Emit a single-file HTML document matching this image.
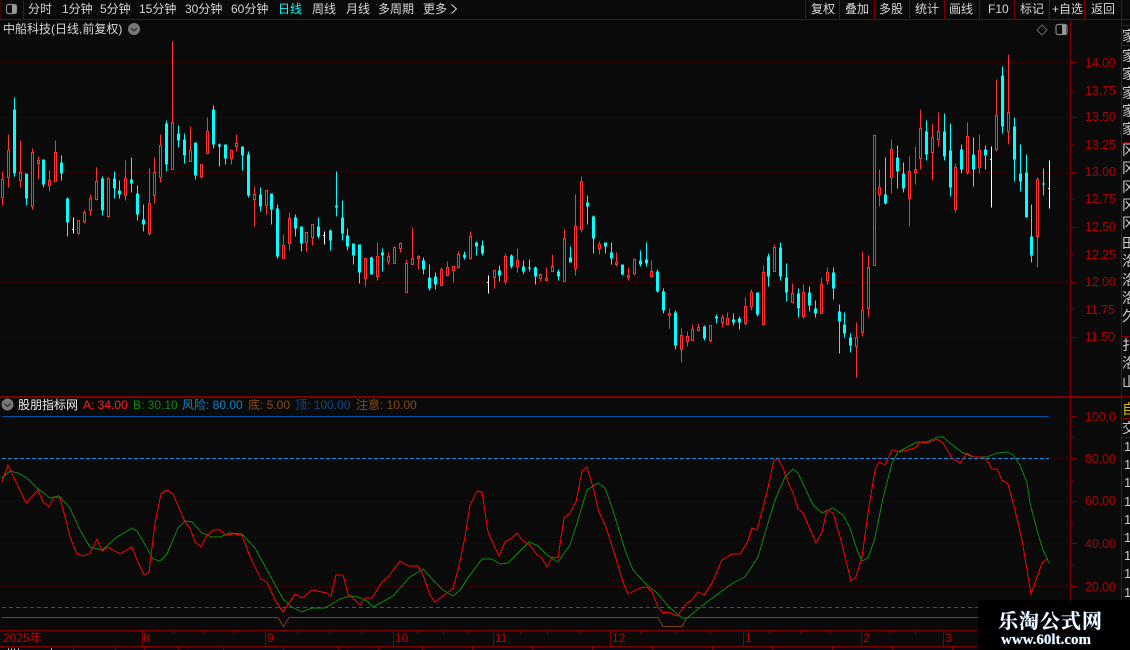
<!DOCTYPE html>
<html lang="zh"><head><meta charset="utf-8"><title>中船科技</title>
<style>
html,body{margin:0;padding:0;background:#0a0a0a}
#r{position:relative;width:1130px;height:650px;overflow:hidden;background:#0a0a0a;font:12px/14px "Liberation Sans","WenQuanYi Zen Hei","Noto Sans CJK SC",sans-serif;color:#d8d8d8}
#r svg.m{position:absolute;left:0;top:0}
.t{position:absolute;white-space:pre;line-height:14px;font-size:12px}
.tb{top:2px}
.ax{position:absolute;left:1085px;color:#b00000;font-size:12.500px;line-height:14px;letter-spacing:-.1px}
.sd{position:absolute;left:1122px;width:8px;overflow:hidden;color:#ccc;font-size:14px;line-height:18.3px;white-space:pre}
.tm{position:absolute;top:631px;color:#c00000;font-size:12px;line-height:15px}
</style></head><body><div id="r">
<svg class="m" width="1130" height="650" viewBox="0 0 1130 650" shape-rendering="crispEdges">
<g stroke="#560000" stroke-dasharray="1 3" fill="none">
<path d="M2 62.5H1070M2 117.5H1070M2 172.5H1070M2 227.5H1070M2 282.5H1070M2 337.5H1070M2 458.5H1070M2 501.5H1070M2 543.5H1070M2 586.5H1070"/>
</g>
<g stroke="#7f0000" fill="none">
<path d="M0 19.5H1130M0 .5V19M23.5 0V19M805.5 0V19M839.5 0V19M874.5 0V19M909.5 0V19M944.5 0V19M979.5 0V19M1014.5 0V19M1049.5 0V19M1084.5 0V19M1121.5 0V650"/>
<path d="M1070.5 20V647M0 396.5H1122M0 397.5H1122M0 630.5H1070M0 646.5H1130"/>
<path d="M1122 25.5H1130M1122 45.5H1130M1122 142.5H1130M1122 239.5H1130M1122 336.5H1130M1122 396.5H1130M1122 418.5H1130M1122 437.5H1130"/>
<path d="M1071 62.5H1077M1071 90.5H1074M1071 117.5H1077M1071 144.5H1074M1071 172.5H1077M1071 199.5H1074M1071 227.5H1077M1071 254.5H1074M1071 282.5H1077M1071 309.5H1074M1071 337.5H1077"/>
<path d="M1071 416.5H1077M1071 437.5H1074M1071 458.5H1077M1071 480.5H1074M1071 501.5H1077M1071 522.5H1074M1071 543.5H1077M1071 565.5H1074M1071 586.5H1077M1071 607.5H1074"/>
<path d="M142.5 630V647M265.5 630V647M393.5 630V647M493.5 630V647M610.5 630V647M743.5 630V647M861.5 630V647M943.5 630V647"/>
<path d="M173.5 631V634M204.5 631V634M234.5 631V634M297.5 631V634M329.5 631V634M361.5 631V634M418.5 631V634M443.5 631V634M468.5 631V634M520.5 631V634M547.5 631V634M580.5 631V634M640.5 631V634M675.5 631V634M710.5 631V634M770.5 631V634M800.5 631V634M830.5 631V634M890.5 631V634M915.5 631V634"/>
<path d="M73.5 647V650M115.5 647V650M144.5 647V650M178.5 647V650M223.5 647V650M283.5 647V650M338.5 647V650M378.5 647V650M422.5 647V650M472.5 647V650M532.5 647V650M592.5 647V650M652.5 647V650M712.5 647V650M772.5 647V650M832.5 647V650M892.5 647V650M952.5 647V650"/>
</g>
<path d="M8.500 648.500V650M11.500 648.500V650M14.500 648.500V650M18.500 648.500V650M51.500 648.500V650" stroke="#ddd" fill="none"/>
<path d="M451.500 4.500l5 4.500-5 4.500" stroke="#d8d8d8" fill="none" shape-rendering="auto"/>
<g transform="translate(0,.5)">
<path fill="none" stroke="#ff3232" d="M2.5 171V179M2.5 197V205M1.5 179h2v18h-2zM8.5 134V150M8.5 177V187M7.5 150h2v27h-2zM20.5 140V172M20.5 180V187M19.5 172h2v8h-2zM32.5 148V152M32.5 206V209M31.5 152h2v54h-2zM38.5 156V160M38.5 163V179M37.5 160h2v3h-2zM49.5 170V180M49.5 185V191M48.5 180h2v5h-2zM55.5 140V152M54.5 152h2v29h-2zM78.5 233V234M77.5 220h2v13h-2zM84.5 210V212M84.5 221V223M83.5 212h2v9h-2zM90.5 194V198M90.5 210V215M89.5 198h2v12h-2zM96.5 167V181M96.5 199V200M95.5 181h2v18h-2zM108.5 177V178M108.5 216V217M107.5 178h2v38h-2zM125.5 160V178M125.5 195V200M124.5 178h2v17h-2zM149.5 168V203M149.5 233V235M148.5 203h2v30h-2zM154.5 157V172M154.5 195V203M153.5 172h2v23h-2zM160.5 134V145M160.5 177V182M159.5 145h2v32h-2zM172.5 41V122M171.5 122h2v47h-2zM190.5 126V150M189.5 150h2v11h-2zM201.5 176V178M200.5 164h2v12h-2zM207.5 117V131M206.5 131h2v22h-2zM231.5 149V150M231.5 158V164M230.5 150h2v8h-2zM236.5 134V143M236.5 146V151M235.5 143h2v3h-2zM254.5 186V194M254.5 199V226M253.5 194h2v5h-2zM266.5 205V214M265.5 190h2v15h-2z"/>
<path fill="none" stroke="#ff3232" d="M283.5 234V245M282.5 245h2v13h-2zM289.5 212V218M289.5 243V250M288.5 218h2v25h-2zM306.5 242V251M305.5 232h2v10h-2zM312.5 237V245M311.5 224h2v13h-2zM365.5 278V286M364.5 258h2v20h-2zM377.5 242V256M377.5 276V280M376.5 256h2v20h-2zM388.5 252V256M388.5 261V264M387.5 256h2v5h-2zM394.5 246V247M393.5 247h2v16h-2zM400.5 242V243M400.5 248V252M399.5 243h2v5h-2zM406.5 259V263M405.5 263h2v29h-2zM412.5 227V258M411.5 258h2v6h-2zM418.5 255V256M418.5 258V269M417.5 256h2v2h-2zM441.5 267V269M440.5 269h2v16h-2zM447.5 261V267M446.5 267h2v8h-2zM453.5 270V282M452.5 266h2v4h-2zM458.5 251V254M458.5 267V268M457.5 254h2v13h-2zM470.5 231V236M470.5 258V259M469.5 236h2v22h-2zM494.5 277V288M493.5 270h2v7h-2zM505.5 253V256M505.5 281V284M504.5 256h2v25h-2zM517.5 248V260M517.5 266V272M516.5 260h2v6h-2zM540.5 273V274M540.5 278V281M539.5 274h2v4h-2zM546.5 267V278M545.5 278h2v2h-2zM552.5 254V266M551.5 266h2v5h-2zM564.5 229V238M563.5 238h2v43h-2zM575.5 194V226M575.5 268V275M574.5 226h2v42h-2zM581.5 176V181M581.5 229V232M580.5 181h2v48h-2zM599.5 241V244M599.5 248V254M598.5 244h2v4h-2zM616.5 252V262M616.5 264V266M615.5 262h2v2h-2zM628.5 267V275M628.5 277V280M627.5 275h2v2h-2zM634.5 258V259M634.5 273V275M633.5 259h2v14h-2zM651.5 260V271M651.5 276V277M650.5 271h2v5h-2z"/>
<path fill="none" stroke="#ff3232" d="M669.5 308V313M669.5 315V328M668.5 313h2v2h-2zM681.5 328V335M681.5 349V362M680.5 335h2v14h-2zM687.5 331V336M687.5 341V346M686.5 336h2v5h-2zM692.5 324V329M691.5 329h2v11h-2zM698.5 323V327M697.5 327h2v3h-2zM710.5 340V342M709.5 325h2v15h-2zM722.5 314V317M722.5 322V327M721.5 317h2v5h-2zM727.5 312V318M726.5 318h2v6h-2zM745.5 297V306M745.5 323V325M744.5 306h2v17h-2zM751.5 289V292M751.5 306V310M750.5 292h2v14h-2zM763.5 265V272M763.5 324V325M762.5 272h2v52h-2zM774.5 244V247M773.5 247h2v24h-2zM792.5 283V293M791.5 293h2v9h-2zM803.5 284V292M803.5 316V318M802.5 292h2v24h-2zM821.5 277V284M820.5 284h2v29h-2zM827.5 267V272M827.5 280V284M826.5 272h2v8h-2zM856.5 322V337M856.5 346V377M855.5 337h2v9h-2zM862.5 251V310M862.5 332V336M861.5 310h2v22h-2zM868.5 255V267M868.5 308V317M867.5 267h2v41h-2zM873.5 135h2v130h-2zM879.5 169V187M879.5 194V206M878.5 187h2v7h-2zM891.5 139V149M891.5 177V193M890.5 149h2v28h-2zM909.5 156V171M909.5 198V226M908.5 171h2v27h-2zM915.5 146V169M915.5 172V184M914.5 169h2v3h-2zM920.5 109V128M920.5 158V169M919.5 128h2v30h-2zM932.5 123V137M932.5 152V180M931.5 137h2v15h-2zM938.5 112V131M938.5 139V146M937.5 131h2v8h-2zM955.5 163V167M955.5 209V212M954.5 167h2v42h-2zM967.5 122V136M967.5 172V174M966.5 136h2v36h-2zM979.5 134V150M979.5 167V173M978.5 150h2v17h-2zM996.5 79V115M996.5 149V151M995.5 115h2v34h-2zM1008.5 54V112M1008.5 131V144M1007.5 112h2v19h-2zM1037.5 177V179M1037.5 236V267M1036.5 179h2v57h-2z"/>
<path fill="none" stroke="#0ff" d="M14.5 97V176M26.5 173V205M43.5 159V187M61.5 155V180M67.5 197V236M102.5 176V215M114.5 171V198M119.5 180V198M131.5 157V192M137.5 185V220M143.5 204V231M166.5 120V171M178.5 125V147M184.5 133V163M195.5 142V179M213.5 105V148M219.5 143V166M225.5 144V164M242.5 146V170M248.5 151V197M260.5 187V211M271.5 193V224M277.5 204V258M295.5 214V236M301.5 226V251M318.5 217V238M330.5 229V250M336.5 171V216M342.5 200V240M347.5 228V250M353.5 243V264M359.5 244V283M371.5 256V274M382.5 248V271M423.5 257V274M429.5 264V290M435.5 272V289M464.5 251V259M476.5 241V255M482.5 240V255M499.5 265V281M511.5 254V268M523.5 260V274M529.5 259V271M535.5 266V284M558.5 269V280M570.5 246V262M587.5 195V224M593.5 215V253M605.5 242V253M611.5 242V264M622.5 264V275M640.5 250V266M646.5 242V266M657.5 269V292M663.5 288V313M675.5 310V349M704.5 325V340M716.5 314V323M733.5 313V325M739.5 316V329M757.5 292V316M768.5 253V286M780.5 242V280M786.5 263V301M798.5 288V317M809.5 286V311M815.5 300V317M833.5 267V299M839.5 304V353M844.5 312V337M850.5 333V352M885.5 157V204M897.5 145V188M903.5 162V192M926.5 120V160M944.5 113V160M950.5 123V196M961.5 144V173M973.5 137V186M985.5 145V169M1002.5 66V133M1014.5 117V181M1020.5 144V191M1026.5 154V217M1031.5 204V262M1043.5 168V195"/>
<path fill="none" stroke="#0ff" stroke-width="3" d="M14.5 109V173M26.5 173V198M43.5 159V184M61.5 162V173M67.5 198V222M102.5 178V210M114.5 178V188M119.5 190V194M131.5 179V183M137.5 193V214M143.5 219V224M166.5 123V164M178.5 133V140M184.5 139V155M195.5 142V175M213.5 109V144M219.5 144V146M225.5 144V158M242.5 146V155M248.5 154V195M260.5 194V206M271.5 193V209M277.5 208V256M295.5 217V228M301.5 226V243M318.5 226V236M330.5 230V240M336.5 205V207M342.5 217V233M347.5 235V246M353.5 243V255M359.5 244V272M371.5 257V274M382.5 252V255M423.5 260V269M429.5 277V288M435.5 276V284M464.5 254V257M476.5 242V246M482.5 245V253M499.5 270V275M511.5 255V266M523.5 266V271M529.5 267V268M535.5 267V276M558.5 271V276M570.5 257V262M587.5 202V206M593.5 216V238M605.5 242V246M611.5 252V258M622.5 264V274M640.5 260V264M646.5 259V263M657.5 271V291M663.5 291V310M675.5 312V345M704.5 326V338M716.5 316V318M733.5 319V322M739.5 318V322M757.5 292V314M768.5 256V276M780.5 247V276M786.5 277V292M798.5 293V308M809.5 292V305M815.5 308V313M833.5 272V288M839.5 311V321M844.5 324V333M850.5 337V345M885.5 194V203M897.5 157V171M903.5 173V188M926.5 131V154M944.5 131V156M950.5 150V187M961.5 149V169M973.5 154V169M985.5 149V155M1002.5 75V126M1014.5 126V159M1020.5 173V181M1026.5 172V217M1031.5 236V255M1043.5 183V184"/>
<path fill="none" stroke="#fff" d="M73.5 217V233M72 229H73M324.5 231V244M323 235H324M488.5 275V293M487 282H488M991.5 146V207M990 159H991M1049.5 160V208M1048 188H1049"/>
</g>
<path d="M2 416.5H1049" stroke="#00559f" fill="none"/>
<path d="M2 458.5H1049" stroke="#0090e0" stroke-dasharray="4 2" fill="none"/>
<path d="M2 607.5H1070" stroke="#7a4210" stroke-dasharray="4 3" fill="none"/>
<g fill="none">
<path d="M2 617.5H278L283.500 626.500L289 617.500H658L663 626.500H682L687 617.500H1070" stroke="#7a4210"/>
<polyline stroke="#0a8a0a" points="2,478 10,471 18,473 27,478 37,488 50,498 58,496 60,497 70,508 80,530 90,547 102,550 117,537 132,528 137,531 147,548 153,559 160,561 167,554 178,528 185,521 192,522 202,533 212,537 220,537 230,533 242,534 255,548 267,570 283,599 292,607 302,612 312,608 325,608 335,602 340,599 350,596 358,597 367,601 373,607 393,596 410,577 423,569 433,580 443,590 453,596 460,590 470,575 482,559 492,559 500,564 508,563 517,554 529,542 538,546 547,555 558,562 570,545 578,520 587,490 598,483 605,488 613,510 625,550 633,570 647,585 657,593 670,608 682,618 687,618 707,602 733,583 745,577 758,557 765,533 775,500 785,477 793,469 798,473 813,505 822,513 833,508 843,515 850,528 857,550 862,561 868,558 875,538 883,498 892,463 898,452 917,442 927,442 937,437 943,437 950,443 963,453 973,457 987,457 997,453 1007,452 1013,455 1020,465 1027,483 1030,503 1037,530 1043,550 1049,563"/>
<polyline stroke="#ff0000" points="2,482 8,465 26,503 38,490 43,502 49,507 54,497 60,498 65,517 70,537 77,554 84,556 90,553 97,539 102,551 108,547 120,554 132,547 137,560 144,575 149,572 155,523 161,494 167,490 173,494 185,522 190,528 195,542 201,547 207,535 214,530 220,530 226,535 233,534 242,535 250,557 261,579 267,582 275,600 283,612 295,594 302,598 312,590 327,593 331,596 336,575 343,575 348,594 355,600 360,605 365,598 372,598 382,582 388,577 400,561 408,566 418,566 423,575 430,595 435,602 447,593 453,588 458,570 465,537 470,505 477,491 482,492 488,532 499,556 505,542 512,538 517,533 523,541 530,545 537,555 541,557 547,567 552,557 558,558 564,518 570,513 576,502 582,471 587,467 593,487 599,512 606,527 617,562 623,582 628,594 640,588 647,587 652,592 658,607 663,613 668,612 677,616 687,603 692,600 698,592 704,595 712,583 722,560 732,554 740,554 747,543 752,528 757,530 767,492 774,460 778,459 783,468 788,482 793,493 798,509 803,513 816,543 822,532 827,510 833,513 840,537 851,581 856,577 862,557 868,513 875,470 879,462 885,465 892,450 900,452 915,448 920,442 927,443 937,439 943,443 952,458 960,463 967,453 973,457 982,457 987,460 992,469 997,469 1002,480 1008,484 1015,510 1022,540 1031,594 1042,563 1048,558"/>
</g>
<g shape-rendering="auto" fill="none">
<circle cx="134" cy="29" r="6" fill="#777"/><path d="M131 28l3 3 3-3" stroke="#222"/>
<circle cx="7.500" cy="404.500" r="6" fill="#777"/><path d="M4.500 403.500l3 3 3-3" stroke="#222"/>
<path d="M1042 25l5 5-5 5-5-5z" stroke="#666"/>
</g>
<g fill="none" stroke="#888" stroke-width="1.2" shape-rendering="auto">
<rect x="6.500" y="4.500" width="10" height="9" rx="2"/><rect x="1056" y="24.500" width="11" height="10" rx="2"/>
</g>
<rect x="12" y="5" width="4" height="8" fill="#999"/><rect x="1062" y="25" width="4" height="9" fill="#999"/>
</svg>

<span class="t tb" style="left:28px">分时</span>
<span class="t tb" style="left:62px">1分钟</span>
<span class="t tb" style="left:100px">5分钟</span>
<span class="t tb" style="left:139px">15分钟</span>
<span class="t tb" style="left:185px">30分钟</span>
<span class="t tb" style="left:231px">60分钟</span>
<span class="t tb" style="left:278px;color:#0ff">日线</span>
<span class="t tb" style="left:312px">周线</span>
<span class="t tb" style="left:346px">月线</span>
<span class="t tb" style="left:378px">多周期</span>
<span class="t tb" style="left:423px">更多</span>
<span class="t tb" style="left:811px">复权</span>
<span class="t tb" style="left:845px">叠加</span>
<span class="t tb" style="left:879px">多股</span>
<span class="t tb" style="left:915px">统计</span>
<span class="t tb" style="left:949px">画线</span>
<span class="t tb" style="left:988px">F10</span>
<span class="t tb" style="left:1020px">标记</span>
<span class="t tb" style="left:1052px">+自选</span>
<span class="t tb" style="left:1091px">返回</span>
<span class="t" style="left:3px;top:22px">中船科技(日线,前复权)</span>

<div class="ax" style="top:56px">14.00</div><div class="ax" style="top:84px">13.75</div><div class="ax" style="top:110px">13.50</div><div class="ax" style="top:138px">13.25</div><div class="ax" style="top:165px">13.00</div><div class="ax" style="top:192px">12.75</div><div class="ax" style="top:220px">12.50</div><div class="ax" style="top:248px">12.25</div><div class="ax" style="top:275px">12.00</div><div class="ax" style="top:303px">11.75</div><div class="ax" style="top:330px">11.50</div>
<div class="ax" style="top:410px">100.0</div><div class="ax" style="top:452px">80.00</div><div class="ax" style="top:494px">60.00</div><div class="ax" style="top:537px">40.00</div><div class="ax" style="top:580px">20.00</div>

<span class="t" style="left:18px;top:398px;color:#eee">股朋指标网</span>
<span class="t" style="left:83px;top:398px;color:#ff2020">A: 34.00</span>
<span class="t" style="left:133px;top:398px;color:#0a8a0a">B: 30.10</span>
<span class="t" style="left:182px;top:398px;color:#0a84d0">风险: 80.00</span>
<span class="t" style="left:248px;top:398px;color:#8a4a10">底: 5.00</span>
<span class="t" style="left:295px;top:398px;color:#0a4a90">顶: 100.00</span>
<span class="t" style="left:356px;top:398px;color:#8a4a10">注意: 10.00</span>

<span class="tm" style="left:3px">2025年</span><span class="tm" style="left:143px">8</span><span class="tm" style="left:267px">9</span><span class="tm" style="left:395px">10</span><span class="tm" style="left:495px">11</span><span class="tm" style="left:612px">12</span><span class="tm" style="left:745px">1</span><span class="tm" style="left:863px">2</span><span class="tm" style="left:945px">3</span>

<div class="sd" style="top:27px">家</div>
<div class="sd" style="top:47px">家
家
家
家
家</div>
<div class="sd" style="top:141px">冈
冈
冈
冈
冈</div>
<div class="sd" style="top:234px">田
洛
洛
洛
久</div>
<div class="sd" style="top:336px">扌
洛
山</div>
<div class="sd" style="top:400px;color:#d8c000">自</div>
<div class="sd" style="top:419px">交</div>
<div class="sd" style="top:438px;left:1124px;width:6px;line-height:18.2px;font-size:13px">1
1
1
1
1
1
1
1
1</div>

<div style="position:absolute;left:978px;top:600px;width:152px;height:50px;background:#000"></div>
<span class="t" style="left:998px;top:608px;font:bold 20px/24px 'Noto Serif CJK SC','Liberation Serif',serif;color:#fff;letter-spacing:1px;text-shadow:0 0 1px #6af">乐淘公式网</span>
<span class="t" style="left:1001px;top:632px;font:bold 15px/16px 'Liberation Serif',serif;color:#fff;text-shadow:0 0 1px #6af">www.60lt.com</span>
</div></body></html>
